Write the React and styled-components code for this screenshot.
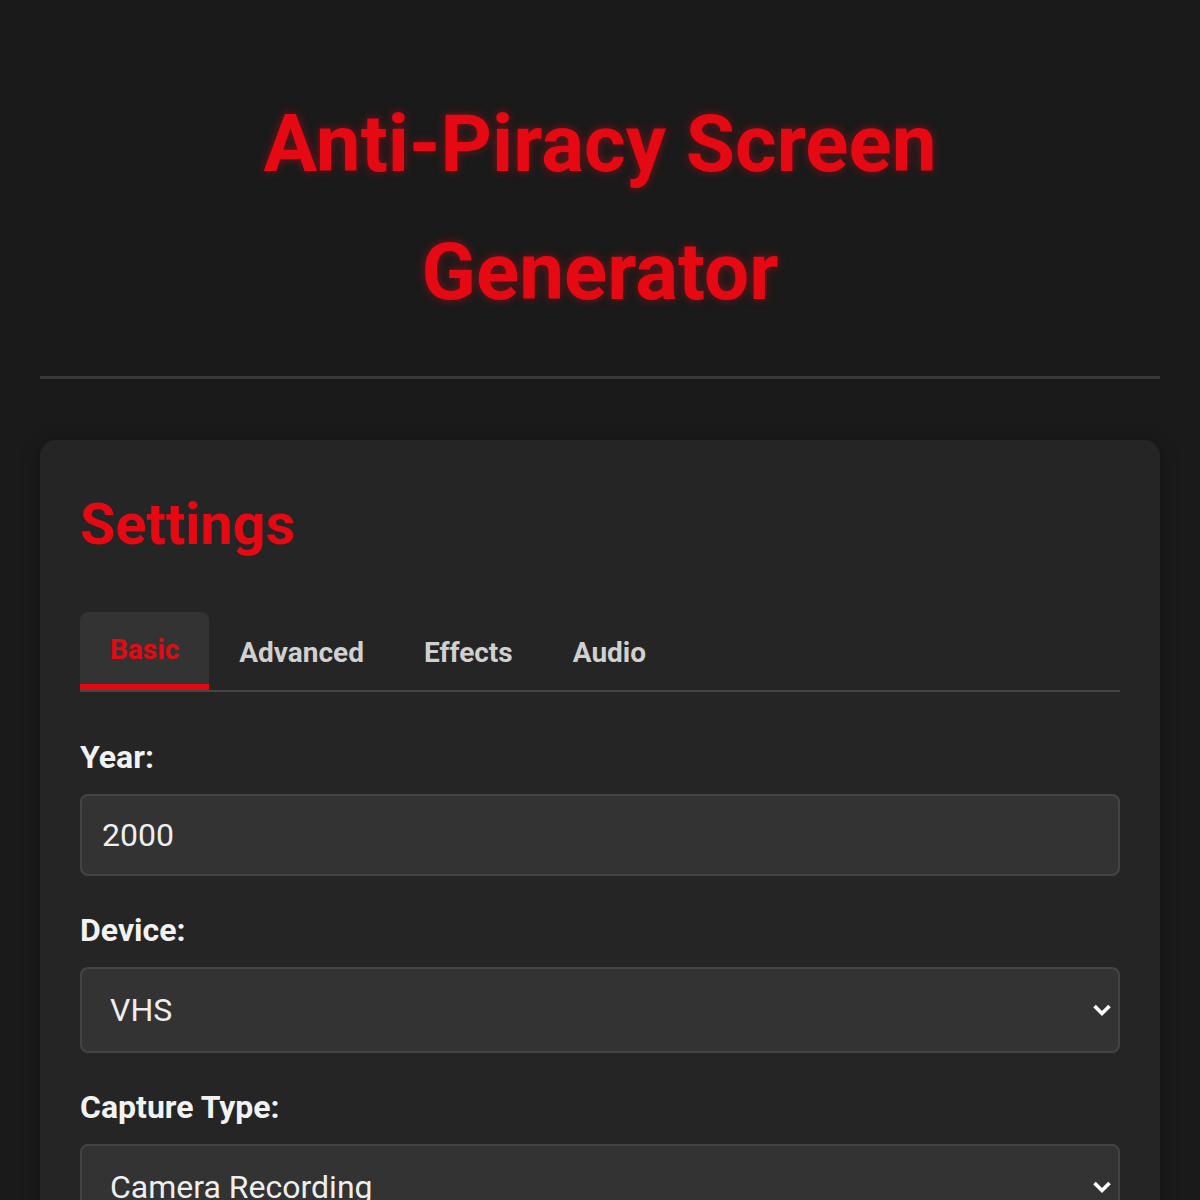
import React, { useState } from "react";
import styled, { createGlobalStyle } from "styled-components";

const Global = createGlobalStyle`
  html, body { margin: 0; padding: 0; background: #1a1a1a; }
  body {
    font-family: Roboto, "Liberation Sans", Arial, sans-serif;
    color: #f0f0f0;
    line-height: 1.6;
  }
  * { box-sizing: border-box; }
`;

const Page = styled.div`
  padding: 0 40px 40px;
`;

const Header = styled.header`
  padding: 80px 0 40px;
  border-bottom: 3px solid #383838;
  text-align: center;
`;

const Title = styled.h1`
  margin: 0;
  font-size: 80px;
  line-height: 128px;
  font-weight: 700;
  color: #e50914;
  text-shadow: 0 0 10px rgba(229, 9, 20, 0.5);
`;

const Card = styled.section`
  margin-top: 61px;
  background: #252525;
  border-radius: 16px;
  padding: 40px;
  box-shadow: 0 4px 20px rgba(0, 0, 0, 0.3);
`;

const CardTitle = styled.h2`
  margin: 0 0 42px;
  font-size: 57.5px;
  line-height: 90px;
  font-weight: 700;
  color: #e50914;
`;

const TabList = styled.div`
  display: flex;
  border-bottom: 2px solid #444;
  margin-bottom: 47px;
`;

const Tab = styled.button`
  display: flex;
  align-items: center;
  justify-content: center;
  height: 78px;
  padding: 3px 30px 0;
  border: none;
  border-bottom: ${(p) => (p.$active ? "6px solid #e50914" : "none")};
  border-radius: 8px 8px 0 0;
  background: ${(p) => (p.$active ? "#333" : "transparent")};
  color: ${(p) => (p.$active ? "#e50914" : "#d0d0d0")};
  font-family: inherit;
  font-size: 28px;
  font-weight: 700;
  line-height: 32px;
  cursor: pointer;
`;

const Group = styled.div`
  margin-bottom: 36px;
`;

const Label = styled.label`
  display: block;
  font-size: 32px;
  font-weight: 700;
  line-height: 36px;
  color: #f2f2f2;
  margin-bottom: 19px;
`;

const Input = styled.input`
  display: block;
  width: 100%;
  height: 82px;
  padding: 0 20px;
  background: #333;
  border: 2px solid #444;
  border-radius: 8px;
  color: #eee;
  font-family: inherit;
  font-size: 32px;
  outline: none;
`;

const SelectWrap = styled.div`
  position: relative;
`;

const Select = styled.select`
  display: block;
  width: 100%;
  height: 86px;
  padding: 0 50px 0 28px;
  appearance: none;
  -webkit-appearance: none;
  background: #333;
  border: 2px solid #444;
  border-radius: 8px;
  color: #eee;
  font-family: inherit;
  font-size: 32px;
  outline: none;
`;

const Chevron = styled.svg`
  position: absolute;
  right: 8px;
  top: 50%;
  transform: translateY(-50%);
  pointer-events: none;
`;

const ChevronIcon = () => (
  <Chevron width="20" height="14" viewBox="0 0 20 14">
    <polyline
      points="2.5,3 10,10.5 17.5,3"
      fill="none"
      stroke="#fff"
      strokeWidth="3.6"
      strokeLinejoin="miter"
    />
  </Chevron>
);

const tabs = ["Basic", "Advanced", "Effects", "Audio"];

export default function App() {
  const [active, setActive] = useState("Basic");
  return (
    <>
      <Global />
      <Page>
        <Header>
          <Title>
            Anti-Piracy Screen
            <br />
            Generator
          </Title>
        </Header>
        <Card>
          <CardTitle>Settings</CardTitle>
          <TabList>
            {tabs.map((t) => (
              <Tab key={t} $active={t === active} onClick={() => setActive(t)}>
                {t}
              </Tab>
            ))}
          </TabList>
          <Group>
            <Label htmlFor="year">Year:</Label>
            <Input id="year" type="text" defaultValue="2000" />
          </Group>
          <Group>
            <Label htmlFor="device">Device:</Label>
            <SelectWrap>
              <Select id="device" defaultValue="VHS">
                <option>VHS</option>
                <option>DVD</option>
                <option>Blu-ray</option>
              </Select>
              <ChevronIcon />
            </SelectWrap>
          </Group>
          <Group>
            <Label htmlFor="capture">Capture Type:</Label>
            <SelectWrap>
              <Select id="capture" defaultValue="Camera Recording">
                <option>Camera Recording</option>
                <option>Screen Capture</option>
              </Select>
              <ChevronIcon />
            </SelectWrap>
          </Group>
        </Card>
      </Page>
    </>
  );
}
